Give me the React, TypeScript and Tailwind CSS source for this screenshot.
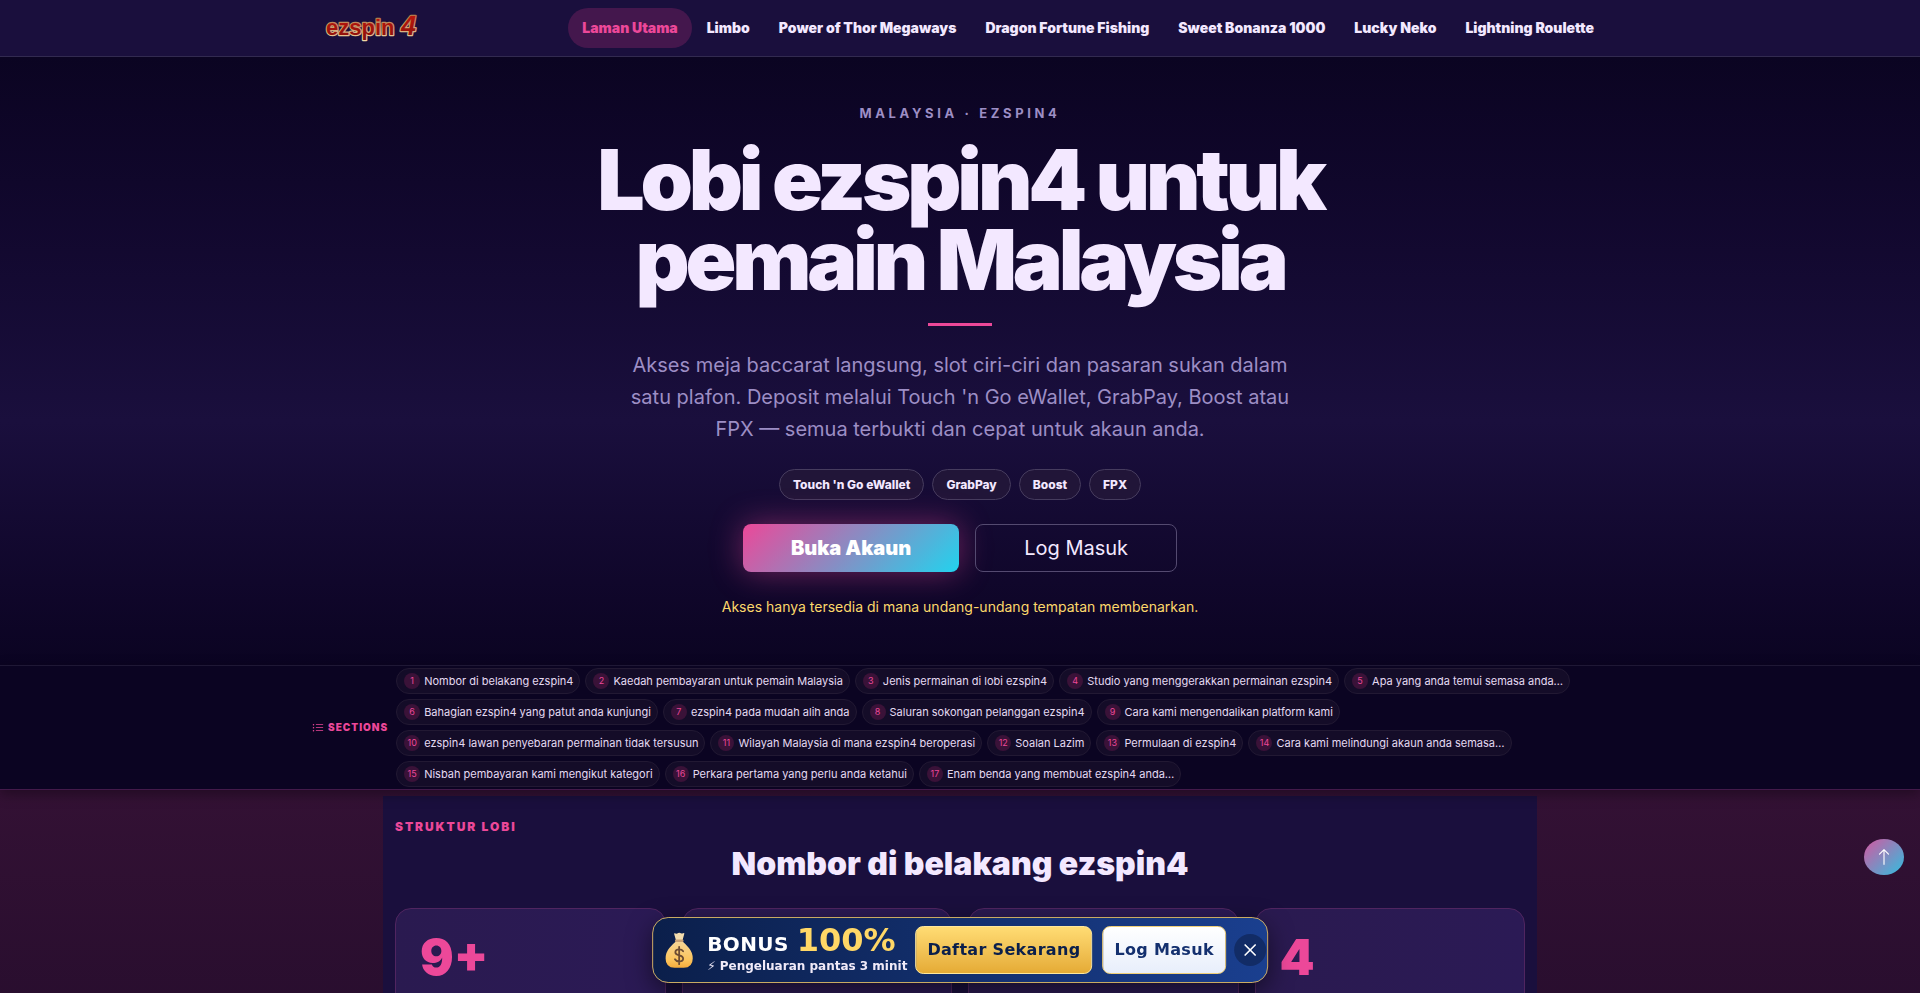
import React from 'react';
import { X } from 'lucide-react';
import { BsArrowUp, BsListUl } from 'react-icons/bs';

const NAV_ITEMS = [
  'Laman Utama',
  'Limbo',
  'Power of Thor Megaways',
  'Dragon Fortune Fishing',
  'Sweet Bonanza 1000',
  'Lucky Neko',
  'Lightning Roulette',
];

const PAYMENTS = ["Touch 'n Go eWallet", 'GrabPay', 'Boost', 'FPX'];

const SECTIONS = [
  'Nombor di belakang ezspin4',
  'Kaedah pembayaran untuk pemain Malaysia',
  'Jenis permainan di lobi ezspin4',
  'Studio yang menggerakkan permainan ezspin4',
  'Apa yang anda temui semasa anda…',
  'Bahagian ezspin4 yang patut anda kunjungi',
  'ezspin4 pada mudah alih anda',
  'Saluran sokongan pelanggan ezspin4',
  'Cara kami mengendalikan platform kami',
  'ezspin4 lawan penyebaran permainan tidak tersusun',
  'Wilayah Malaysia di mana ezspin4 beroperasi',
  'Soalan Lazim',
  'Permulaan di ezspin4',
  'Cara kami melindungi akaun anda semasa…',
  'Nisbah pembayaran kami mengikut kategori',
  'Perkara pertama yang perlu anda ketahui',
  'Enam benda yang membuat ezspin4 anda…',
];

const STATS = ['9+', '', '', '4'];

const Logo: React.FC = () => (
  <svg viewBox="0 0 100 32" className="h-8 w-[100px] overflow-visible" role="img" aria-label="ezspin4">
    <defs>
      <linearGradient id="logoRed" x1="0" y1="0" x2="0" y2="1">
        <stop offset="0" stopColor="#c4160c" />
        <stop offset="1" stopColor="#86100c" />
      </linearGradient>
      <linearGradient id="logoGold" x1="0" y1="0" x2="0" y2="1">
        <stop offset="0" stopColor="#a8683c" />
        <stop offset="1" stopColor="#f0d6a4" />
      </linearGradient>
    </defs>
    <g
      fontFamily="'Liberation Sans', Arial, sans-serif"
      fontWeight="700"
      fill="url(#logoRed)"
      stroke="url(#logoGold)"
      strokeWidth="2.4"
      paintOrder="stroke"
      strokeLinejoin="round"
    >
      <text x="2" y="23" fontSize="22">ezspin</text>
      <text x="77" y="23" fontSize="27" fontStyle="italic">4</text>
    </g>
  </svg>
);

const MoneyBag: React.FC = () => (
  <svg viewBox="0 0 28 36" className="h-9 w-7" aria-hidden="true">
    <defs>
      <linearGradient id="bag" x1="0" y1="0" x2="0" y2="1">
        <stop offset="0" stopColor="#f6d596" />
        <stop offset="0.7" stopColor="#fcc45c" />
        <stop offset="1" stopColor="#f5ab3c" />
      </linearGradient>
    </defs>
    <path
      d="M9.500 1.300 Q11.500 2.200 13 1.100 Q14.500 .5 15.800 1.300 Q17.500 1.800 18.800 1 Q19.400 1 19.100 2 L17.400 8.200 L10.800 8.200 L9 2 Q8.800 1.200 9.500 1.300 Z"
      fill="#f3dcae"
    />
    <path
      d="M10.700 9.500 Q7.500 12 4.200 16 Q.4 20.600 .4 26.500 Q.4 35.600 9.500 35.800 L18.500 35.800 Q27.600 35.600 27.600 26.500 Q27.600 20.600 23.800 16 Q20.500 12 17.500 9.500 Z"
      fill="url(#bag)"
    />
    <rect x="9.800" y="7.400" width="8.600" height="2.600" rx="1.300" fill="#c9a074" />
    <path
      d="M18 19.300 Q16.800 17.400 14 17.400 Q10.200 17.600 10.200 20.300 Q10.200 22.600 14 23.300 Q18 24 18 26.800 Q18 29.400 14 29.500 Q11 29.500 9.800 27.300 M14 14.800 V32.200"
      fill="none"
      stroke="#6d4c33"
      strokeWidth="1.800"
      strokeLinecap="round"
    />
  </svg>
);

const Header: React.FC = () => (
  <header className="relative z-10 border-b border-[#322a50] bg-[#1a0f3d]">
    <div className="mx-auto flex h-14 max-w-[1320px] items-center justify-between px-3">
      <a href="#utama" className="ml-3">
        <Logo />
      </a>
      <nav className="flex gap-px">
        {NAV_ITEMS.map((item, i) => (
          <a
            key={item}
            href="#utama"
            className={`flex h-10 items-center whitespace-nowrap rounded-full px-[14px] text-sm font-black ${
              i === 0 ? 'bg-[#44174d] text-[#ec4899]' : 'text-[#f3e8ff]'
            }`}
          >
            {item}
          </a>
        ))}
      </nav>
    </div>
  </header>
);

const Hero: React.FC = () => (
  <section
    id="utama"
    className="flex flex-col items-center bg-linear-to-b from-[#0b0422] via-[#1a0f3d] via-60% to-[#0b0422] px-6 pt-12 pb-[47px] text-center"
  >
    <p className="text-[13px] leading-4 font-bold tracking-[0.28em] text-[#9d8ec5] uppercase">
      Malaysia · ezspin4
    </p>
    <h1 className="mt-[19px] max-w-[800px] text-[84px] leading-20 font-black tracking-tighter text-[#f3e8ff]">
      Lobi ezspin4 untuk pemain Malaysia
    </h1>
    <div className="mt-[23px] h-[3px] w-16 bg-[#ec4899]" />
    <p className="mt-[23px] max-w-[680px] text-xl leading-8 text-[#9d8ec5]">
      Akses meja baccarat langsung, slot ciri-ciri dan pasaran sukan dalam satu plafon. Deposit melalui Touch 'n Go
      eWallet, GrabPay, Boost atau FPX — semua terbukti dan cepat untuk akaun anda.
    </p>
    <ul className="mt-6 flex flex-wrap justify-center gap-2">
      {PAYMENTS.map((name) => (
        <li
          key={name}
          className="rounded-full border border-[#463c5e] bg-[#211538] px-[13px] py-1 text-xs leading-[21px] font-extrabold text-[#f3e8ff]"
        >
          {name}
        </li>
      ))}
    </ul>
    <div className="mt-6 flex gap-4">
      <button className="h-12 rounded-lg bg-linear-135/srgb from-[#ec4899] to-[#22d3ee] px-12 text-xl font-black text-white shadow-[0_0_32px_rgba(236,72,153,0.45)]">
        Buka Akaun
      </button>
      <button className="h-12 rounded-lg border border-[#544a70] px-12 text-xl text-[#f3e8ff]">Log Masuk</button>
    </div>
    <p className="mt-6 text-sm leading-[22px] text-[#fcd86b]">
      Akses hanya tersedia di mana undang-undang tempatan membenarkan.
    </p>
  </section>
);

const SectionIndex: React.FC = () => (
  <nav className="relative border-y border-t-[#1f1835] border-b-[#431a4a] bg-[#0b0422] shadow-[0_4px_12px_rgba(0,0,0,0.35)]">
    <div className="mx-auto flex max-w-[1320px] items-center gap-2 px-3 py-[2px]">
      <span className="flex items-center gap-1 text-[10px] font-black tracking-widest text-[#ec4899] uppercase">
        <BsListUl className="size-3" />
        Sections
      </span>
      <ol className="flex flex-wrap gap-[5px]">
        {SECTIONS.map((title, i) => (
          <li key={title}>
            <a
              href="#struktur"
              className="flex h-[26px] items-center gap-1 rounded-full border border-[#221933] bg-[#140c28] pr-1.5 pl-[7px] text-[11px] text-[#e4daf2]"
            >
              <span className="flex size-4 items-center justify-center rounded-full bg-[#3a1238] text-[9px] text-[#ec4899]">
                {i + 1}
              </span>
              {title}
            </a>
          </li>
        ))}
      </ol>
    </div>
  </nav>
);

const LobbyStats: React.FC = () => (
  <main id="struktur" className="bg-linear-to-b from-[#331134] to-[#260d2d] pt-1.5">
    <div className="mx-auto max-w-[1154px] bg-[#1a0f3d] px-3 pt-[23px]">
      <p className="text-xs leading-4 font-black tracking-[0.16em] text-[#ec4899] uppercase">Struktur Lobi</p>
      <h2 className="mt-[9px] text-center text-[32px] leading-10 font-black text-[#f3e8ff]">
        Nombor di belakang ezspin4
      </h2>
      <div className="mt-6 grid grid-cols-4 gap-4">
        {STATS.map((value, i) => (
          <div
            key={i}
            className="h-40 rounded-2xl border border-[#502560] bg-linear-to-r from-[#2a1a50] to-[#2b1a55] p-6 text-[50px] leading-12 font-black text-[#ec4899]"
          >
            {value}
          </div>
        ))}
      </div>
    </div>
  </main>
);

const BonusBar: React.FC = () => (
  <aside className="fixed bottom-[10px] left-1/2 flex h-[66px] -translate-x-1/2 items-center rounded-2xl border border-[#c9ab62] bg-linear-to-r/srgb from-[#0b1f4b] to-[#1a3f8f] pr-px pl-3 font-['DejaVu_Sans',sans-serif] font-bold whitespace-nowrap shadow-[0_8px_24px_rgba(0,0,0,0.5)]">
    <MoneyBag />
    <div className="ml-[14px]">
      <p className="flex items-baseline gap-2 text-xl leading-7 tracking-[0.02em] text-white">
        BONUS <span className="text-[32px] leading-7 tracking-normal text-[#ffd766]">100%</span>
      </p>
      <p className="text-xs leading-4 text-[#f0eaf8]">⚡ Pengeluaran pantas 3 minit</p>
    </div>
    <button className="ml-2 h-12 rounded-lg border border-[#ffe79a] bg-linear-to-b from-[#ffdc73] to-[#e5ab35] px-[11px] text-base tracking-[0.02em] text-[#0b1f4b]">
      Daftar Sekarang
    </button>
    <button className="ml-[10px] h-12 rounded-lg border border-[#f0cf78] bg-linear-to-b from-white to-[#e8eefb] px-[11px] text-base tracking-[0.02em] text-[#14306f]">
      Log Masuk
    </button>
    <button aria-label="Tutup" className="ml-2 flex size-8 items-center justify-center rounded-full bg-[#122c66] text-white">
      <X className="size-5" strokeWidth={2} />
    </button>
  </aside>
);

const App: React.FC = () => {
  return (
    <div className="h-screen overflow-hidden bg-[#260d2d] font-[Inter,sans-serif]">
      <Header />
      <Hero />
      <SectionIndex />
      <LobbyStats />
      <BonusBar />
      <a
        href="#utama"
        aria-label="Ke atas"
        className="fixed right-4 bottom-[118px] flex h-9 w-10 items-center justify-center rounded-[50%] bg-linear-135/srgb from-[#d557a0] to-[#30bfe0] text-white"
      >
        <BsArrowUp className="size-[18px]" />
      </a>
    </div>
  );
};

export default App;
